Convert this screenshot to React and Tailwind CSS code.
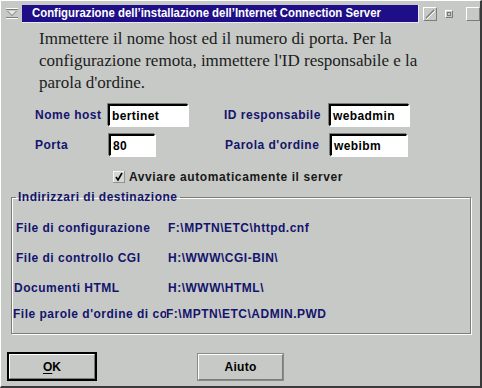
import React from 'react';

const SANS = { fontFamily: '"Liberation Sans", Arial, sans-serif' };

const Field = ({ value, className }) => (
  <div
    className={`h-[22px] bg-white border-t-2 border-l-2 border-t-black border-l-black border-b border-r border-b-white border-r-white shadow-[1px_1px_0_#fff,-1px_-1px_0_#7b7d7b] pl-[2px] flex items-center text-[12px] font-bold text-black tracking-[0.4px] ${className}`}
  >
    {value}
  </div>
);

const Label = ({ children, className }) => (
  <div className={`text-[12px] font-bold text-[#14146c] tracking-[0.5px] whitespace-nowrap ${className}`}>
    {children}
  </div>
);

const SysMenuIcon = () => (
  <svg width="12" height="11" viewBox="0 0 12 11">
    <rect x="0" y="0" width="12" height="1" fill="#fff" />
    <rect x="0" y="1" width="12" height="1" fill="#7b7d7b" />
    <path d="M1 3 H11 L6 8 Z" fill="#7b7d7b" />
    <path d="M2 3 H10 L6 7 Z" fill="#e8e8e8" />
    <rect x="0" y="9" width="12" height="1" fill="#7b7d7b" />
    <rect x="0" y="10" width="12" height="1" fill="#fff" />
  </svg>
);

const TitleButton = ({ children, className }) => (
  <div
    className={`flex items-center justify-center border-t border-l border-white border-b border-r border-b-[#7b7d7b] border-r-[#7b7d7b] ${className}`}
  >
    {children}
  </div>
);

const Row = ({ label, value, top, pl, labelWidth }) => (
  <div className={`flex items-center h-[20px] ${top} ${pl}`}>
    <div className={`overflow-hidden shrink-0 ${labelWidth}`}>
      <Label>{label}</Label>
    </div>
    <Label>{value}</Label>
  </div>
);

export default function App() {
  return (
    <div
      style={SANS}
      className="w-[482px] h-[388px] bg-[#c6c9c6] border-t border-l border-white border-r-2 border-b-2 border-r-[#3a3a3a] border-b-[#3a3a3a] flex flex-col overflow-hidden"
    >
      {/* title bar */}
      <div className="h-[22px] flex items-center shrink-0">
        <div className="w-[21px] flex justify-center pl-[2px] pt-[2px]">
          <SysMenuIcon />
        </div>
        <div className="w-[402px] h-[18px] mt-[3px] bg-[#1e0e88] border-b border-r border-[#e8e8f0] flex items-center pl-[10px] overflow-hidden">
          <span className="text-white font-bold text-[13px] whitespace-nowrap inline-block origin-left scale-x-[0.875]">
            Configurazione dell’installazione dell’Internet Connection Server
          </span>
        </div>
        <div className="flex items-center ml-[4px] mt-[3px] gap-[6px]">
          <TitleButton className="w-[14px] h-[14px]">
            <svg width="12" height="12" viewBox="0 0 12 12">
              <line x1="2" y1="10" x2="10" y2="2" stroke="#7b7d7b" strokeWidth="1.3" />
              <line x1="3" y1="11" x2="11" y2="3" stroke="#fff" strokeWidth="1" />
            </svg>
          </TitleButton>
          <TitleButton className="w-[8px] h-[8px] ml-[2px]">
            <div className="w-[4px] h-[4px] border border-[#7b7d7b]" />
          </TitleButton>
          <TitleButton className="w-[14px] h-[14px] ml-[7px]" />
        </div>
      </div>

      {/* description */}
      <div
        style={{ fontFamily: '"Liberation Serif", "Times New Roman", serif' }}
        className="pl-[38px] mt-[5px] text-[17px] leading-[22px] text-[#1c1c1c] whitespace-nowrap"
      >
        Immettere il nome host ed il numero di porta. Per la
        <br />
        configurazione remota, immettere l'ID responsabile e la
        <br />
        parola d'ordine.
      </div>

      {/* form */}
      <div className="flex items-center mt-[10px] pl-[34px]">
        <Label className="w-[73px]">Nome host</Label>
        <Field value="bertinet" className="w-[80px]" />
        <Label className="ml-[36px] w-[105px]">ID responsabile</Label>
        <Field value="webadmin" className="w-[80px]" />
      </div>
      <div className="flex items-center mt-[8px] pl-[34px]">
        <Label className="w-[74px]">Porta</Label>
        <Field value="80" className="w-[46px]" />
        <Label className="ml-[70px] w-[105px]">Parola d'ordine</Label>
        <Field value="webibm" className="w-[77px]" />
      </div>

      {/* checkbox */}
      <div className="flex items-center mt-[12px] pl-[112px]">
        <svg width="12" height="12" viewBox="0 0 12 12">
          <rect x="0" y="0" width="12" height="12" fill="#d6d8d6" />
          <path d="M0 12 V0 H12" fill="none" stroke="#fff" strokeWidth="1.5" />
          <path d="M0 12 H12 V0" fill="none" stroke="#7b7d7b" strokeWidth="1.5" />
          <path d="M3 6 L5 9 L9 2" fill="none" stroke="#000" strokeWidth="1.6" />
        </svg>
        <div className="ml-[4px] text-[12px] font-bold text-[#181818] tracking-[0.6px]">
          Avviare automaticamente il server
        </div>
      </div>

      {/* group */}
      <fieldset className="mx-[10px] mt-[2px] h-[146px] border border-[#7b7d7b] shadow-[inset_1px_1px_0_#fff,1px_1px_0_#fff] w-[460px]">
        <legend className="ml-[4px] px-[2px]">
          <Label>Indirizzari di destinazione</Label>
        </legend>
        <Row label="File di configurazione" value="F:\MPTN\ETC\httpd.cnf" top="mt-[12px]" pl="pl-[4px]" labelWidth="w-[152px]" />
        <Row label="File di controllo CGI" value="H:\WWW\CGI-BIN\" top="mt-[10px]" pl="pl-[4px]" labelWidth="w-[152px]" />
        <Row label="Documenti HTML" value="H:\WWW\HTML\" top="mt-[10px]" pl="pl-[2px]" labelWidth="w-[154px]" />
        <Row label="File parole d'ordine di controllo" value="F:\MPTN\ETC\ADMIN.PWD" top="mt-[6px]" pl="pl-[1px]" labelWidth="w-[153px]" />
      </fieldset>

      {/* buttons */}
      <div className="flex items-center mt-[18px] pl-[6px]">
        <div className="w-[90px] h-[29px] border-2 border-black flex">
          <div className="flex-1 border-t border-l border-white border-b border-r border-b-[#7b7d7b] border-r-[#7b7d7b] flex items-center justify-center text-[12px] font-bold text-black">
            <span className="underline underline-offset-2">O</span>K
          </div>
        </div>
        <div className="ml-[100px] w-[87px] h-[28px] border border-[#8a8c8a] flex">
          <div className="flex-1 border-t border-l border-white border-b border-r border-b-[#7b7d7b] border-r-[#7b7d7b] flex items-center justify-center text-[12px] font-bold text-black tracking-[0.3px]">
            Aiuto
          </div>
        </div>
      </div>
    </div>
  );
}
